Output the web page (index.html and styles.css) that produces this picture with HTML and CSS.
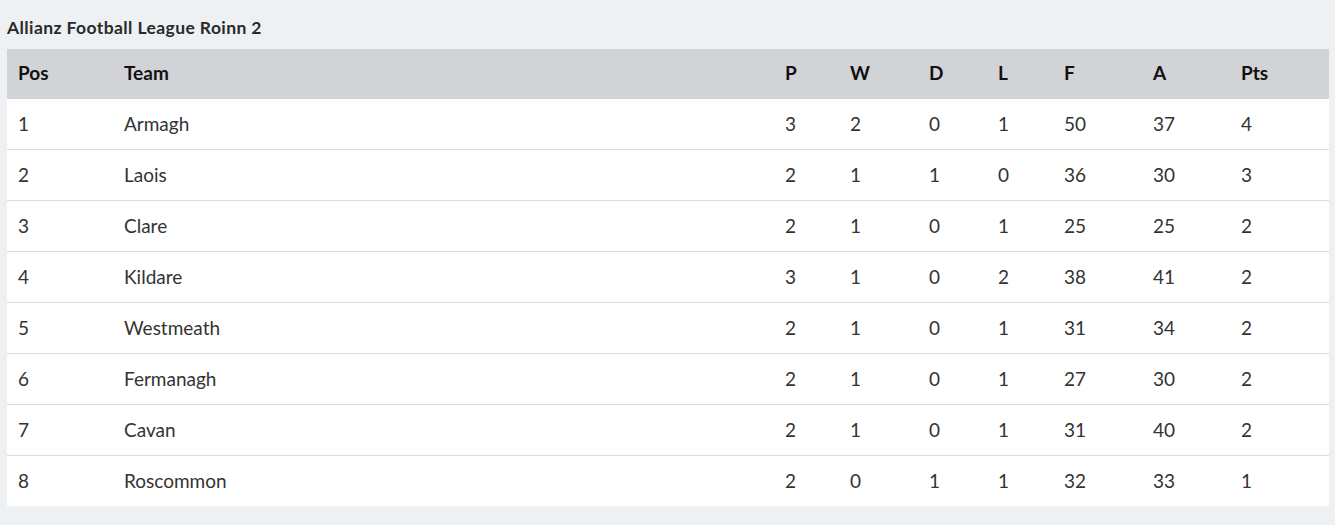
FILE: index.html
```html
<!DOCTYPE html>
<html lang="en">
<head>
<meta charset="utf-8">
<title>Allianz Football League Roinn 2</title>
<link rel="stylesheet" href="styles.css">
</head>
<body>
<div class="wrap">
  <h2 class="title">Allianz Football League Roinn 2</h2>
  <table class="standings">
    <colgroup>
      <col class="c-pos"><col class="c-team"><col class="c-p"><col class="c-w"><col class="c-d"><col class="c-l"><col class="c-f"><col class="c-a"><col class="c-pts">
    </colgroup>
    <thead>
      <tr><th>Pos</th><th>Team</th><th>P</th><th>W</th><th>D</th><th>L</th><th>F</th><th>A</th><th>Pts</th></tr>
    </thead>
    <tbody>
      <tr><td>1</td><td>Armagh</td><td>3</td><td>2</td><td>0</td><td>1</td><td>50</td><td>37</td><td>4</td></tr>
      <tr><td>2</td><td>Laois</td><td>2</td><td>1</td><td>1</td><td>0</td><td>36</td><td>30</td><td>3</td></tr>
      <tr><td>3</td><td>Clare</td><td>2</td><td>1</td><td>0</td><td>1</td><td>25</td><td>25</td><td>2</td></tr>
      <tr><td>4</td><td>Kildare</td><td>3</td><td>1</td><td>0</td><td>2</td><td>38</td><td>41</td><td>2</td></tr>
      <tr><td>5</td><td>Westmeath</td><td>2</td><td>1</td><td>0</td><td>1</td><td>31</td><td>34</td><td>2</td></tr>
      <tr><td>6</td><td>Fermanagh</td><td>2</td><td>1</td><td>0</td><td>1</td><td>27</td><td>30</td><td>2</td></tr>
      <tr><td>7</td><td>Cavan</td><td>2</td><td>1</td><td>0</td><td>1</td><td>31</td><td>40</td><td>2</td></tr>
      <tr><td>8</td><td>Roscommon</td><td>2</td><td>0</td><td>1</td><td>1</td><td>32</td><td>33</td><td>1</td></tr>
    </tbody>
  </table>
</div>
</body>
</html>
```
FILE: styles.css
```css
html, body {
  margin: 0;
  padding: 0;
  background: #eef1f4;
}
body {
  font-family: Lato, "Open Sans", Arial, sans-serif;
  color: #2b2b2b;
}
.wrap {
  padding: 18px 6px 18px 7px;
}
.title {
  margin: 0 0 11px 0;
  font-size: 17.5px;
  line-height: 20px;
  letter-spacing: 0.4px;
  font-weight: 700;
  color: #2a2a2a;
}
.standings {
  width: 1322px;
  border-collapse: collapse;
  table-layout: fixed;
  background: #fff;
}
.c-pos { width: 106px; }
.c-team { width: 661px; }
.c-p { width: 65px; }
.c-w { width: 79px; }
.c-d { width: 69px; }
.c-l { width: 66px; }
.c-f { width: 89px; }
.c-a { width: 88px; }
.c-pts { width: 99px; }
.standings th {
  background: #d1d3d6;
  height: 48px;
  padding: 0 0 2px 11px;
  line-height: 22px;
  text-align: left;
  font-size: 19px;
  font-weight: 700;
  color: #111;
}
.standings td {
  height: 49px;
  padding: 0 0 1px 11px;
  line-height: 22px;
  font-size: 19px;
  color: #333;
  border-top: 1px solid #dcdcdc;
}
.standings tbody tr:first-child td {
  border-top: none;
}
```
